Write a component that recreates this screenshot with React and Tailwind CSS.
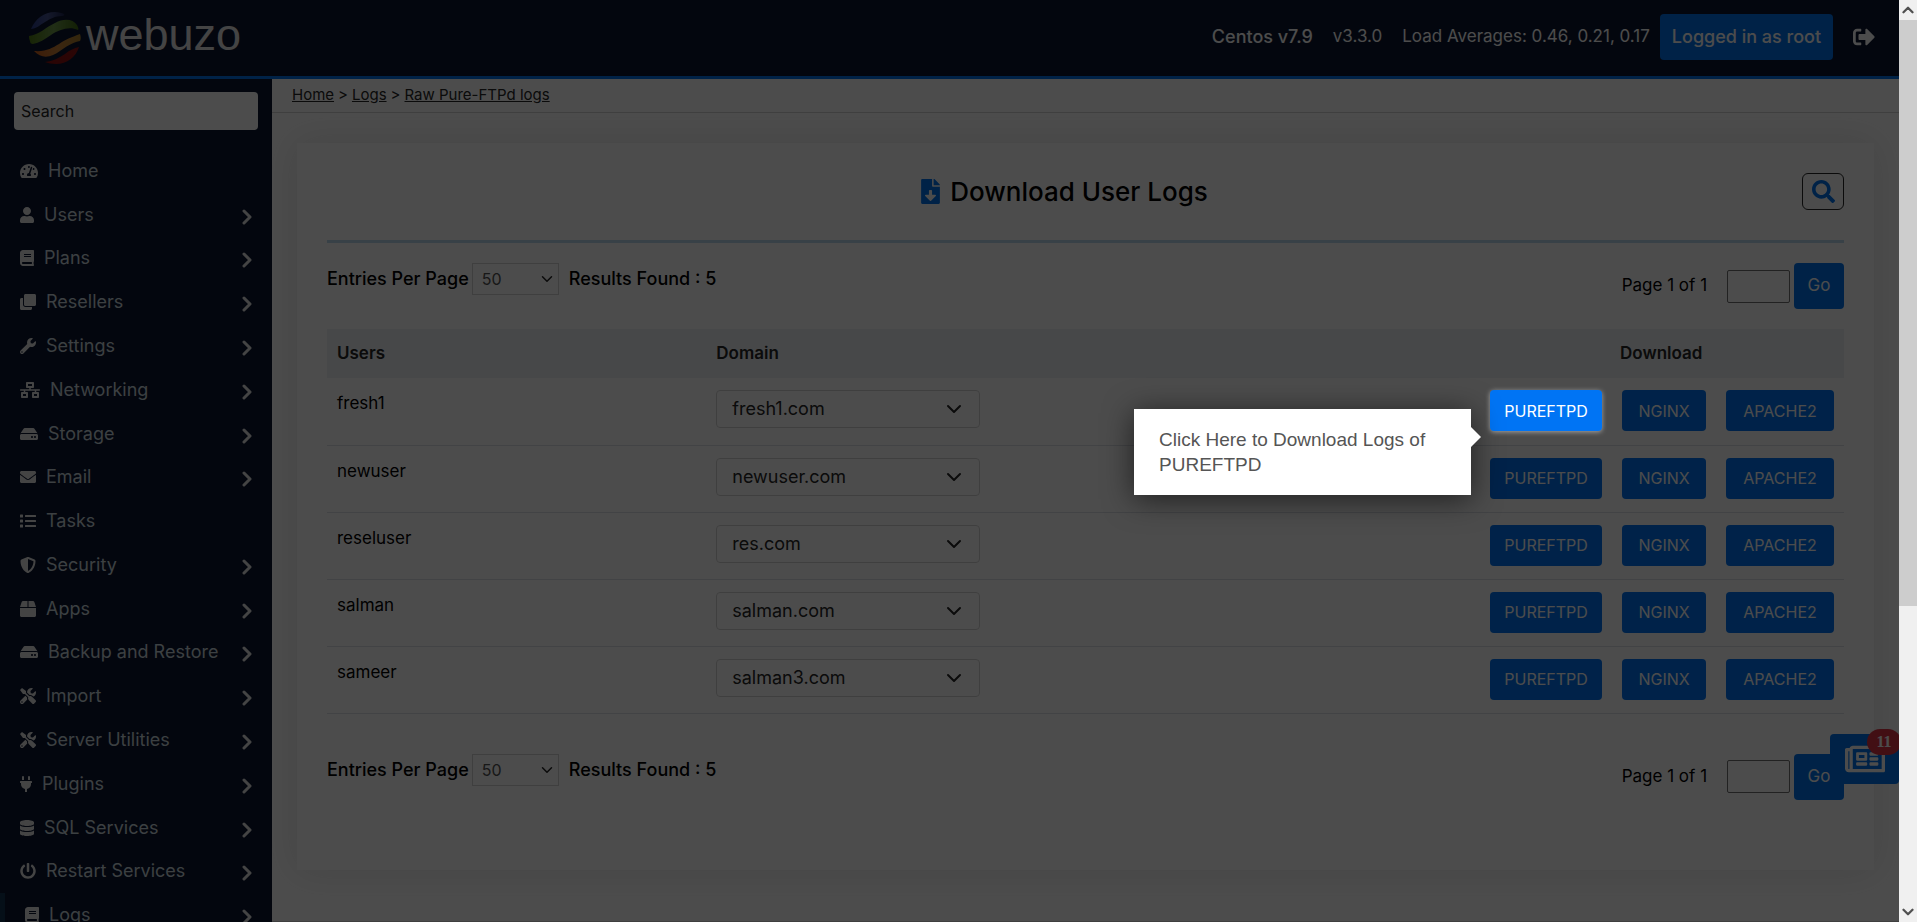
import { useId } from "react";
import {
  FaTachometerAlt, FaUser, FaBook, FaClone, FaWrench, FaNetworkWired, FaHdd, FaEnvelope, FaList,
  FaShieldAlt, FaBox, FaTools, FaPlug, FaDatabase, FaPowerOff, FaSignOutAlt, FaFileDownload,
  FaSearch, FaRegNewspaper,
} from "react-icons/fa";

const menu = [
  { label: "Home", icon: FaTachometerAlt, width: "w-[18px]" },
  { label: "Users", icon: FaUser, width: "w-[14px]", nested: true },
  { label: "Plans", icon: FaBook, width: "w-[14px]", nested: true },
  { label: "Resellers", icon: FaClone, width: "w-4", nested: true },
  { label: "Settings", icon: FaWrench, width: "w-4", nested: true },
  { label: "Networking", icon: FaNetworkWired, width: "w-5", nested: true },
  { label: "Storage", icon: FaHdd, width: "w-[18px]", nested: true },
  { label: "Email", icon: FaEnvelope, width: "w-4", nested: true },
  { label: "Tasks", icon: FaList, width: "w-4" },
  { label: "Security", icon: FaShieldAlt, width: "w-4", nested: true },
  { label: "Apps", icon: FaBox, width: "w-4", nested: true },
  { label: "Backup and Restore", icon: FaHdd, width: "w-[18px]", nested: true },
  { label: "Import", icon: FaTools, width: "w-4", nested: true },
  { label: "Server Utilities", icon: FaTools, width: "w-4", nested: true },
  { label: "Plugins", icon: FaPlug, width: "w-3", nested: true },
  { label: "SQL Services", icon: FaDatabase, width: "w-[14px]", nested: true },
  { label: "Restart Services", icon: FaPowerOff, width: "w-4", nested: true },
  { label: "Logs", icon: FaBook, width: "w-[14px]", nested: true, active: true },
];

const rows = [
  { user: "fresh1", domain: "fresh1.com" },
  { user: "newuser", domain: "newuser.com" },
  { user: "reseluser", domain: "res.com" },
  { user: "salman", domain: "salman.com" },
  { user: "sameer", domain: "salman3.com" },
];

function Chevron({ className }) {
  return (
    <svg viewBox="0 0 16 16" className={className} fill="none" stroke="currentColor" strokeWidth="2" strokeLinecap="round" strokeLinejoin="round" aria-hidden="true">
      <path d="M2 5l6 6 6-6" />
    </svg>
  );
}

function Logo() {
  return (
    <a href="#home" className="flex items-center gap-[5px]" aria-label="webuzo">
      <svg viewBox="0 0 52 52" className="size-[52px]" aria-hidden="true">
        <defs>
          <linearGradient id="blue" x1="0" x2="1"><stop offset="0" stopColor="#2c3f8f" /><stop offset=".5" stopColor="#46548f" /><stop offset="1" stopColor="#1c2450" /></linearGradient>
          <linearGradient id="green" x1="0" x2="1"><stop offset="0" stopColor="#4f7a14" /><stop offset=".5" stopColor="#6f9a4c" /><stop offset="1" stopColor="#3f6a12" /></linearGradient>
          <linearGradient id="orange" x1="0" x2="1"><stop offset="0" stopColor="#d0601c" /><stop offset=".5" stopColor="#c88038" /><stop offset="1" stopColor="#a8802c" /></linearGradient>
          <linearGradient id="red" x1="0" x2="1"><stop offset="0" stopColor="#8c1010" /><stop offset="1" stopColor="#901414" /></linearGradient>
        </defs>
        <path fill="url(#blue)" d="M2 17C6 7 15 0 26 0c4 0 7 1 9 2 1 1 0 2-2 2-7 0-12 3-17 6C11 13 7 17 2 17Z" />
        <path fill="url(#green)" d="M0 24c10-1 17-9 26-13 9-5 18-4 22 2 1 2 2 4 1 5-9-4-19 0-27 5-6 4-12 8-18 9-2 0-3-1-3-3-1-2-1-4-1-5Z" />
        <path fill="url(#orange)" d="M5 39c12 1 18-3 25-7 7-5 13-7 21-10 1 3 1 5 0 7-9 2-14 6-20 10-8 6-18 9-26 0Z" />
        <path fill="url(#red)" d="M16 50c8-1 14-4 20-8 5-4 9-6 14-7-3 10-12 17-23 17-4 0-8-1-11-2Z" />
      </svg>
      <span className="pb-1.5 font-['Liberation_Sans',sans-serif] text-[45px] leading-[52px] text-neutral-200">webuzo</span>
    </a>
  );
}

function Header() {
  return (
    <header className="flex h-[79px] shrink-0 items-center justify-between border-b-3 border-[#0074ee] bg-[#0b1530] pl-[29px] pr-6 text-white">
      <Logo />
      <div className="flex items-center pb-0.5 text-[17px]">
        <span className="text-lg font-medium">Centos v7.9</span>
        <span className="ml-5">v3.3.0</span>
        <span className="ml-5 mr-[10px]">Load Averages: 0.46, 0.21, 0.17</span>
        <button type="button" className="h-[46px] rounded bg-[#0074ee] px-3 text-lg font-medium">Logged in as root</button>
        <a href="#logout" aria-label="Log out" className="ml-5"><FaSignOutAlt className="size-[22px]" /></a>
      </div>
    </header>
  );
}

function Sidebar() {
  return (
    <nav className="w-[272px] shrink-0 overflow-hidden bg-[#0b1530]">
      <input type="search" aria-label="Search" placeholder="Search" className="ml-[14px] mt-[13px] block h-[38px] w-[244px] rounded bg-white px-[7px] text-base text-black placeholder:text-neutral-800" />
      <ul className="mt-[19px] grid h-[788px] auto-rows-fr">
        {menu.map(({ label, icon: Icon, width, nested, active }) => (
          <li key={label} className={active ? "border-l-5 border-[#133450]" : ""}>
            <a href={"#" + label.toLowerCase().replaceAll(" ", "-")} className="flex h-full items-center pl-5 pr-[17px] text-lg text-[#c8d5dc]">
              <Icon className={"h-4 shrink-0 text-neutral-200 " + width} />
              <span className="ml-[10px] grow whitespace-nowrap">{label}</span>
              {nested && <Chevron className="mt-1 size-4 shrink-0 -rotate-90 stroke-3 text-neutral-200" />}
            </a>
          </li>
        ))}
      </ul>
    </nav>
  );
}

function Pager() {
  const id = useId();
  return (
    <div className="flex h-[46px] items-start justify-between">
      <div className="flex items-center text-lg font-medium">
        <label htmlFor={id + "size"} className="mr-[3px] whitespace-nowrap">Entries Per Page</label>
        <div className="relative">
          <select id={id + "size"} defaultValue="50" className="block h-8 w-[87px] appearance-none border border-neutral-300 bg-transparent px-[9px] text-base font-normal text-neutral-600">
            <option>50</option>
            <option>100</option>
          </select>
          <Chevron className="pointer-events-none absolute right-1.5 top-[10px] size-3 text-neutral-800" />
        </div>
        <span className="ml-[10px]">Results Found : 5</span>
      </div>
      <div className="flex items-center text-[17px]">
        <label htmlFor={id + "page"} className="mr-5">Page 1 of 1</label>
        <input id={id + "page"} type="text" className="h-[33px] w-[63px] rounded-xs border border-neutral-500 px-1" />
        <button type="button" className="ml-1 h-[46px] w-[50px] rounded bg-[#0074ee] text-white">Go</button>
      </div>
    </div>
  );
}

function Hint() {
  return (
    <div role="tooltip" className="absolute right-[131px] top-[19px] w-[337px] bg-white px-[25px] py-[18px] text-left font-['Liberation_Sans',sans-serif] text-[19px] leading-[25px] text-[#555] shadow-[0_4px_30px_rgba(0,0,0,0.6)]">
      Click Here to Download Logs of PUREFTPD
      <svg viewBox="0 0 10 20" className="absolute left-full top-[18px] h-5 w-[10px] fill-white" aria-hidden="true">
        <path d="M0 0l10 10L0 20Z" />
      </svg>
    </div>
  );
}

function LogButton({ label, width, highlighted }) {
  return (
    <button type="button" className={"h-[41px] rounded bg-[#0074f4] text-white " + width + (highlighted ? " relative z-20 shadow-[0_1px_5px_rgba(255,255,255,0.5)]" : "")}>
      {label}
    </button>
  );
}

function LogsTable() {
  return (
    <table className="mt-5 w-full table-fixed border-collapse">
      <colgroup>
        <col className="w-1/4" />
        <col />
        <col className="w-[132px]" />
        <col className="w-[104px]" />
        <col className="w-[128px]" />
      </colgroup>
      <thead>
        <tr className="h-[49px] bg-[#eef2f5] text-left text-[17px] text-neutral-800">
          <th className="px-[10px] font-semibold">Users</th>
          <th className="px-[10px] font-semibold">Domain</th>
          <td />
          <th colSpan="2" className="px-2 font-semibold">Download</th>
        </tr>
      </thead>
      <tbody>
        {rows.map(({ user, domain }, i) => (
          <tr key={user} className="h-[67px] border-b border-[#dee2e6] align-top">
            <td className="px-[10px] pt-[14px] text-[17px] leading-[22px]">{user}</td>
            <td className="px-[10px] pt-3">
              <div className="relative w-[264px]">
                <select aria-label={"Domain of " + user} className="block h-[38px] w-full appearance-none rounded border border-neutral-300 bg-transparent px-[15px] text-lg text-neutral-800">
                  <option>{domain}</option>
                </select>
                <Chevron className="pointer-events-none absolute right-[18px] top-[11px] size-4 text-neutral-800" />
              </div>
            </td>
            <td className="px-[10px] pt-3">
              <div className="relative">
                <LogButton label="PUREFTPD" width="w-28" highlighted={i === 0} />
                {i === 0 && <div className="absolute right-0 top-0 z-20"><Hint /></div>}
              </div>
            </td>
            <td className="px-[10px] pt-3"><LogButton label="NGINX" width="w-[84px]" /></td>
            <td className="px-[10px] pt-3"><LogButton label="APACHE2" width="w-[108px]" /></td>
          </tr>
        ))}
      </tbody>
    </table>
  );
}

function ScrollBar() {
  return (
    <div className="flex w-[18px] shrink-0 flex-col items-center bg-[#f0f0f0] text-[#505050]" aria-hidden="true">
      <div className="flex h-5 items-center"><Chevron className="size-3 rotate-180 stroke-3" /></div>
      <div className="h-[586px] w-full bg-[#cdcdcd]" />
      <div className="mt-auto flex h-5 items-center"><Chevron className="size-3 stroke-3" /></div>
    </div>
  );
}

export default function App() {
  return (
    <div className="flex h-screen overflow-hidden font-[Inter,'Liberation_Sans',sans-serif] text-base text-black">
      <div className="relative flex min-w-0 grow flex-col overflow-hidden bg-white">
        <Header />
        <div className="flex min-h-0 grow">
          <Sidebar />
          <main className="flex min-w-0 grow flex-col">
            <div className="flex h-[34px] shrink-0 items-center gap-1 border-b border-neutral-300 pl-5 text-[15px] text-neutral-800">
              <a href="#home" className="underline">Home</a>
              <span>&gt;</span>
              <a href="#logs" className="underline">Logs</a>
              <span>&gt;</span>
              <a href="#pure-ftpd" className="underline">Raw Pure-FTPd logs</a>
            </div>
            <section className="mx-[25px] mt-[30px] px-[30px] pb-[70px] pt-[30px] shadow-[0_0_35px_rgba(80,80,80,0.15)]">
              <div className="flex h-[37px] items-center">
                <h1 className="flex grow items-center justify-center gap-[10px] text-[26px] font-medium">
                  <FaFileDownload className="h-[25px] w-[19px] text-[#0074ee]" />
                  Download User Logs
                </h1>
                <button type="button" aria-label="Search logs" className="flex h-[37px] w-[42px] items-center justify-center rounded-md border border-neutral-800 text-[#0074ee]">
                  <FaSearch className="size-[23px]" />
                </button>
              </div>
              <hr className="mb-5 mt-[30px] border-t-3 border-[#bcd9ee]" />
              <Pager />
              <LogsTable />
              <div className="mt-10"><Pager /></div>
            </section>
            <footer className="mt-auto h-px bg-neutral-300" />
          </main>
        </div>
        <button type="button" aria-label="News, 11 unread" className="absolute right-0 top-[734px] h-[50px] w-[69px] rounded bg-[#0074ee] pl-[15px] text-white">
          <FaRegNewspaper className="h-9 w-10" />
          <span className="absolute -right-0.5 -top-[5px] flex h-[26px] w-[34px] items-center justify-center rounded-full bg-[#dc3545] font-['Liberation_Serif',serif] text-base font-bold">11</span>
        </button>
        <div className="pointer-events-none absolute inset-0 z-10 bg-black/70" />
      </div>
      <ScrollBar />
    </div>
  );
}
